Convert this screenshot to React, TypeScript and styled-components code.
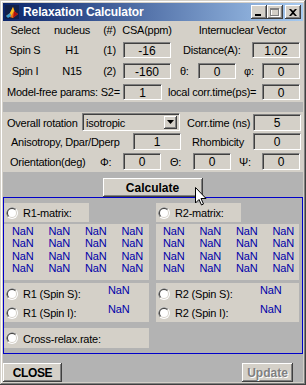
import React from 'react';
import styled, { createGlobalStyle } from 'styled-components';

const FACE = '#d4d0c8';
const FIG = '#b3b3b3';
const NAN_BLUE = '#0000a8';

const GlobalStyle = createGlobalStyle`
  html, body { margin: 0; padding: 0; background: #fff; }
  body { font-family: "Liberation Sans", Arial, sans-serif; }
  * { box-sizing: border-box; }
`;

const Window = styled.div`
  position: relative;
  width: 306px;
  height: 385px;
  padding: 3px;
  background: ${FACE};
  box-shadow: inset -1px -1px #404040, inset 1px 1px ${FACE}, inset -2px -2px #808080, inset 2px 2px #fff;
  display: flex;
  flex-direction: column;
`;

const TitleBar = styled.div`
  height: 18px;
  display: flex;
  align-items: center;
  padding-left: 2px;
  padding-right: 2px;
  background: linear-gradient(to right, #0a246a, #a6caf0);
`;

const TitleText = styled.span`
  margin-left: 4px;
  flex: 1;
  color: #fff;
  font: bold 12px "Liberation Sans", Arial, sans-serif;
  letter-spacing: -0.1px;
`;

const TitleButton = styled.div<{ $ml?: number }>`
  width: 16px;
  height: 14px;
  margin-left: ${(p) => p.$ml ?? 0}px;
  background: ${FACE};
  box-shadow: inset -1px -1px #404040, inset 1px 1px #fff, inset -2px -2px #808080;
  display: flex;
  align-items: center;
  justify-content: center;
`;

const Client = styled.div`
  height: 361px;
  background: ${FIG};
  display: flex;
  flex-direction: column;
`;

const Panel = styled.div<{ $h: number; $mt?: number }>`
  height: ${(p) => p.$h}px;
  margin-top: ${(p) => p.$mt ?? 0}px;
  background: ${FACE};
  display: flex;
  flex-direction: column;
`;

const Row = styled.div<{ $h?: number; $mt?: number }>`
  display: flex;
  align-items: center;
  height: ${(p) => p.$h ?? 16}px;
  margin-top: ${(p) => p.$mt ?? 0}px;
`;

const Text = styled.span<{ $w?: number; $ml?: number; $pl?: number; $align?: string }>`
  width: ${(p) => (p.$w ? `${p.$w}px` : 'auto')};
  margin-left: ${(p) => p.$ml ?? 0}px;
  padding-left: ${(p) => p.$pl ?? 0}px;
  text-align: ${(p) => p.$align ?? 'left'};
  font-size: 11px;
  letter-spacing: -0.25px;
  color: #000;
  white-space: nowrap;
  flex-shrink: 0;
`;

const Field = styled.div<{ $w: number; $h?: number; $ml?: number }>`
  width: ${(p) => p.$w}px;
  height: ${(p) => p.$h ?? 16}px;
  margin-left: ${(p) => p.$ml ?? 0}px;
  flex-shrink: 0;
  background: ${FACE};
  border: 1px solid;
  border-color: #808080 #fff #fff #808080;
  box-shadow: inset 1px 1px #404040;
  font-size: 12px;
  display: flex;
  align-items: center;
  justify-content: center;
  padding-top: 1px;
`;

const Select = styled.div`
  width: 98px;
  height: 18px;
  margin-top: -1px;
  flex-shrink: 0;
  background: ${FACE};
  border: 1px solid;
  border-color: #808080 #fff #fff #808080;
  box-shadow: inset 1px 1px #404040;
  display: flex;
  align-items: center;
  padding: 0 2px 0 3px;
  font-size: 11px;
  letter-spacing: -0.2px;
`;

const SelectValue = styled.span`
  flex: 1;
  padding-top: 2px;
`;

const ArrowButton = styled.div`
  width: 13px;
  height: 13px;
  background: ${FACE};
  box-shadow: inset -1px -1px #404040, inset 1px 1px #fff, inset -2px -2px #808080;
  display: flex;
  align-items: center;
  justify-content: center;
`;

const PushButton = styled.button<{ $w: number; $disabled?: boolean }>`
  width: ${(p) => p.$w}px;
  height: 19px;
  padding: 0;
  border: none;
  background: ${FACE};
  box-shadow: inset -1px -1px #404040, inset 1px 1px #fff, inset -2px -2px #808080;
  font: bold 12px "Liberation Sans", Arial, sans-serif;
  color: ${(p) => (p.$disabled ? '#808080' : '#000')};
  text-shadow: ${(p) => (p.$disabled ? '1px 1px #fff' : 'none')};
  flex-shrink: 0;
`;

const CalcRow = styled.div`
  display: flex;
  justify-content: center;
  margin-top: 6px;
  padding-right: 1px;
`;

const ResultBox = styled.div`
  height: 157px;
  width: 300px;
  border: 1px solid #0000c8;
  display: flex;
  gap: 7px;
`;

const Column = styled.div<{ $w: number }>`
  width: ${(p) => p.$w}px;
  display: flex;
  flex-direction: column;
`;

const Block = styled.div<{ $w?: number; $h: number; $mt: number }>`
  width: ${(p) => (p.$w ? `${p.$w}px` : '100%')};
  height: ${(p) => p.$h}px;
  margin-top: ${(p) => p.$mt}px;
  background: ${FACE};
`;

const OptionRow = styled.div<{ $h: number }>`
  height: ${(p) => p.$h}px;
  display: flex;
  align-items: center;
  padding-left: 2px;
  gap: 5px;
`;

const OptionLabel = styled.span<{ $w?: number }>`
  width: ${(p) => (p.$w ? `${p.$w}px` : 'auto')};
  font-size: 11px;
  letter-spacing: -0.2px;
  white-space: nowrap;
  padding-top: 1px;
`;

const Nan = styled.span`
  color: ${NAN_BLUE};
  font-size: 11px;
  line-height: 12.4px;
  letter-spacing: -0.1px;
`;

const SpinNan = styled(Nan)`
  align-self: flex-start;
  line-height: 12px;
`;

const MatrixGrid = styled.div<{ $pl: number }>`
  display: grid;
  grid-template-columns: repeat(4, 36.5px);
  padding: 1px 0 0 ${(p) => p.$pl}px;
`;

const SpinPanel = styled.div`
  padding-top: 1px;
`;

const ButtonBar = styled.div`
  display: flex;
  justify-content: space-between;
  margin-top: 9px;
  padding-right: 10px;
`;

const Cursor = styled.svg`
  position: absolute;
  left: 195px;
  top: 187px;
`;

const Radio: React.FC = () => (
  <svg width="12" height="12" viewBox="0 0 12 12" style={{ flexShrink: 0 }}>
    <circle cx="6" cy="6" r="6" fill="#fff" />
    <path d="M10.24 1.76 A6 6 0 0 0 1.76 10.24 Z" fill="#808080" />
    <circle cx="6" cy="6" r="5" fill={FACE} />
    <path d="M9.54 2.46 A5 5 0 0 0 2.46 9.54 Z" fill="#404040" />
    <circle cx="6" cy="6" r="4" fill="#fff" />
  </svg>
);

const MatlabIcon: React.FC = () => (
  <svg width="14" height="14" viewBox="0 0 14 14">
    <rect width="14" height="14" fill="#10204a" />
    <path d="M1 11 L5 8 L8 2 L10 7 L13 9 L8 13 Z" fill="#e8701a" />
    <path d="M5 8 L8 2 L9 6 L6 11 Z" fill="#f8c020" />
    <path d="M1 11 L5 8 L6 11 L3 13 Z" fill="#3aa0d0" />
    <path d="M9 6 L13 9 L8 13 Z" fill="#b01010" />
  </svg>
);

const Matrix: React.FC<{ pl: number }> = ({ pl }) => (
  <MatrixGrid $pl={pl}>
    {Array.from({ length: 16 }).map((_, i) => (
      <Nan key={i}>NaN</Nan>
    ))}
  </MatrixGrid>
);

const SpinRates: React.FC<{ rate: string }> = ({ rate }) => (
  <SpinPanel>
    <OptionRow $h={19}>
      <Radio />
      <OptionLabel $w={80}>{rate} (Spin S):</OptionLabel>
      <SpinNan>NaN</SpinNan>
    </OptionRow>
    <OptionRow $h={19}>
      <Radio />
      <OptionLabel $w={80}>{rate} (Spin I):</OptionLabel>
      <SpinNan>NaN</SpinNan>
    </OptionRow>
  </SpinPanel>
);

const App: React.FC = () => (
  <>
    <GlobalStyle />
    <Window>
      <TitleBar>
        <MatlabIcon />
        <TitleText>Relaxation Calculator</TitleText>
        <TitleButton>
          <svg width="8" height="8" viewBox="0 0 8 8">
            <rect x="0" y="6" width="6" height="2" fill="#000" />
          </svg>
        </TitleButton>
        <TitleButton>
          <svg width="10" height="9" viewBox="0 0 10 9">
            <rect x="1.5" y="1.5" width="8" height="7" fill="none" stroke="#fff" />
            <rect x="0.5" y="0.5" width="8" height="7" fill="none" stroke="#808080" />
            <rect x="0.5" y="1" width="8" height="1" fill="#808080" />
          </svg>
        </TitleButton>
        <TitleButton $ml={2}>
          <svg width="8" height="7" viewBox="0 0 8 7">
            <path d="M0 0 L2 0 L4 2 L6 0 L8 0 L5 3.5 L8 7 L6 7 L4 5 L2 7 L0 7 L3 3.5 Z" fill="#000" />
          </svg>
        </TitleButton>
      </TitleBar>

      <Client>
        <Panel $h={81}>
          <Row $mt={1}>
            <Text $w={44} $align="center">Select</Text>
            <Text $w={50} $align="center">nucleus</Text>
            <Text $w={25} $align="center">(#)</Text>
            <Text $w={50} $align="center">CSA(ppm)</Text>
            <Text $w={119} $ml={11} $align="center">Internuclear Vector</Text>
          </Row>
          <Row $mt={4}>
            <Text $w={44} $align="center">Spin S</Text>
            <Text $w={50} $align="center">H1</Text>
            <Text $w={25} $align="center">(1)</Text>
            <Field $w={48} $ml={1}>-16</Field>
            <Text $w={69} $ml={12}>Distance(A):</Text>
            <Field $w={48}>1.02</Field>
          </Row>
          <Row $mt={5}>
            <Text $w={44} $align="center">Spin I</Text>
            <Text $w={50} $align="center">N15</Text>
            <Text $w={25} $align="center">(2)</Text>
            <Field $w={48} $ml={1}>-160</Field>
            <Text $w={18} $ml={9}>θ:</Text>
            <Field $w={38}>0</Field>
            <Text $w={18} $ml={8}>φ:</Text>
            <Field $w={38}>0</Field>
          </Row>
          <Row $mt={5}>
            <Text $w={120} $pl={4}>Model-free params: S2=</Text>
            <Field $w={39}>1</Field>
            <Text $w={94} $ml={6}>local corr.time(ps)=</Text>
            <Field $w={38}>0</Field>
          </Row>
        </Panel>

        <Panel $h={60} $mt={10}>
          <Row $h={17} $mt={2}>
            <Text $w={79} $pl={4}>Overall rotation</Text>
            <Select>
              <SelectValue>isotropic</SelectValue>
              <ArrowButton>
                <svg width="7" height="4" viewBox="0 0 7 4">
                  <path d="M0 0 L7 0 L3.5 4 Z" fill="#000" />
                </svg>
              </ArrowButton>
            </Select>
            <Text $w={66} $ml={7}>Corr.time (ns)</Text>
            <Field $w={48} $h={17}>5</Field>
          </Row>
          <Row $h={17} $mt={2}>
            <Text $w={130} $pl={8}>Anisotropy, Dpar/Dperp</Text>
            <Field $w={48} $h={17}>1</Field>
            <Text $w={61} $ml={11}>Rhombicity</Text>
            <Field $w={48} $h={17}>0</Field>
          </Row>
          <Row $h={17} $mt={3}>
            <Text $w={94} $pl={7}>Orientation(deg)</Text>
            <Text $w={26} $pl={3}>Φ:</Text>
            <Field $w={38} $h={17}>0</Field>
            <Text $w={32} $pl={9}>Θ:</Text>
            <Field $w={38} $h={17}>0</Field>
            <Text $w={31} $pl={8}>Ψ:</Text>
            <Field $w={38} $h={17}>0</Field>
          </Row>
        </Panel>

        <CalcRow>
          <PushButton $w={100}>Calculate</PushButton>
        </CalcRow>

        <ResultBox>
          <Column $w={145}>
            <Block $w={85} $h={19} $mt={5}>
              <OptionRow $h={19}>
                <Radio />
                <OptionLabel>R1-matrix:</OptionLabel>
              </OptionRow>
            </Block>
            <Block $h={56} $mt={2}>
              <Matrix pl={8} />
            </Block>
            <Block $h={39} $mt={3}>
              <SpinRates rate="R1" />
            </Block>
            <Block $h={20} $mt={6}>
              <OptionRow $h={20}>
                <Radio />
                <OptionLabel>Cross-relax.rate:</OptionLabel>
              </OptionRow>
            </Block>
          </Column>
          <Column $w={143}>
            <Block $w={85} $h={19} $mt={5}>
              <OptionRow $h={19}>
                <Radio />
                <OptionLabel>R2-matrix:</OptionLabel>
              </OptionRow>
            </Block>
            <Block $h={56} $mt={2}>
              <Matrix pl={7} />
            </Block>
            <Block $h={39} $mt={3}>
              <SpinRates rate="R2" />
            </Block>
          </Column>
        </ResultBox>

        <ButtonBar>
          <PushButton $w={59} style={{ letterSpacing: '-0.4px' }}>CLOSE</PushButton>
          <PushButton $w={51} $disabled>Update</PushButton>
        </ButtonBar>
      </Client>

      <Cursor width="12" height="19" viewBox="0 0 12 19">
        <path d="M0.5 0.5 L0.5 16 L4 12.5 L6.5 18 L8.5 17 L6 11.5 L11 11.5 Z" fill="#fff" stroke="#000" strokeWidth="1" />
      </Cursor>
    </Window>
  </>
);

export default App;
